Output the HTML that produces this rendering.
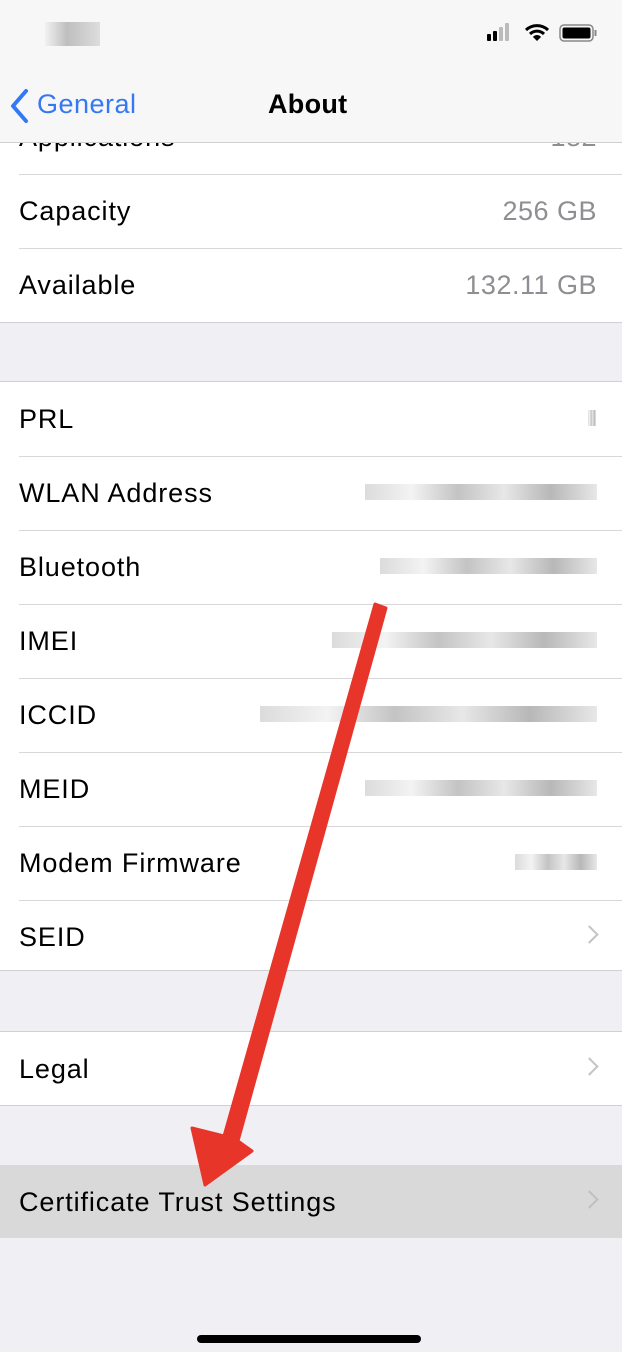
<!DOCTYPE html><html><head><style>
body{margin:0;width:622px;height:1352px;background:#efeff4;font-family:"Liberation Sans",sans-serif;position:relative;overflow:hidden}
.row{position:absolute;left:0;width:622px;height:74px;background:#fff;font-size:27px;letter-spacing:0.9px;color:#000}
.row span{position:absolute;left:19px;top:22px}
.v{position:absolute;right:25px;top:22px;color:#8e8e93;letter-spacing:0.5px}
.sep{position:absolute;left:19px;right:0;height:1px;background:#d8d8dc}
.full{position:absolute;left:0;right:0;height:1px;background:#d0d0d4}
.chev{position:absolute;right:26px;top:28px;width:11px;height:11px;border-right:2px solid #c4c4c8;border-top:2px solid #c4c4c8;transform:rotate(45deg)}
.blur{position:absolute;top:28px;height:16px;background:linear-gradient(90deg,#ccc,#eee 20%,#aaa 40%,#ddd 60%,#999 80%,#ddd);opacity:.7}
</style></head><body>
<div class="row" style="top:100px"><span>Applications</span><div class="v">182</div></div>
<div class="row" style="top:174px"><span>Capacity</span><div class="v">256 GB</div></div>
<div class="row" style="top:248px"><span>Available</span><div class="v">132.11 GB</div></div>
<div class="sep" style="top:174px"></div><div class="sep" style="top:248px"></div><div class="full" style="top:322px"></div>
<div class="full" style="top:381px"></div>
<div class="row" style="top:382px"><span>PRL</span><div class="blur" style="left:588px;width:8px"></div></div>
<div class="row" style="top:456px"><span>WLAN Address</span><div class="blur" style="left:365px;width:232px"></div></div>
<div class="row" style="top:530px"><span>Bluetooth</span><div class="blur" style="left:380px;width:217px"></div></div>
<div class="row" style="top:604px"><span>IMEI</span><div class="blur" style="left:332px;width:265px"></div></div>
<div class="row" style="top:678px"><span>ICCID</span><div class="blur" style="left:260px;width:337px"></div></div>
<div class="row" style="top:752px"><span>MEID</span><div class="blur" style="left:365px;width:232px"></div></div>
<div class="row" style="top:826px"><span>Modem Firmware</span><div class="blur" style="left:515px;width:82px"></div></div>
<div class="row" style="top:900px;height:70px"><span>SEID</span><div class="chev"></div></div>
<div class="sep" style="top:456px"></div><div class="sep" style="top:530px"></div><div class="sep" style="top:604px"></div><div class="sep" style="top:678px"></div><div class="sep" style="top:752px"></div><div class="sep" style="top:826px"></div><div class="sep" style="top:900px"></div><div class="full" style="top:970px"></div>
<div class="full" style="top:1031px"></div>
<div class="row" style="top:1032px;height:73px"><span>Legal</span><div class="chev"></div></div>
<div class="full" style="top:1105px"></div>
<div class="row" style="top:1165px;height:73px;background:#d9d9d9"><span>Certificate Trust Settings</span><div class="chev" style="border-color:#c0c0c0"></div></div>
<div style="position:absolute;left:0;top:0;width:622px;height:142px;background:#f7f7f7;border-bottom:1px solid #d0d0d4"></div>
<div style="position:absolute;left:45px;top:22px;width:55px;height:24px;background:linear-gradient(90deg,#eee,#999 40%,#ccc);opacity:.6"></div>
<svg style="position:absolute;left:486px;top:22px" width="115" height="22"><rect x="1" y="12" width="4" height="7" rx="1"/><rect x="7" y="9" width="4" height="10" rx="1"/><rect x="13" y="5" width="4" height="14" rx="1" fill="#bbb"/><rect x="19" y="1" width="4" height="18" rx="1" fill="#bbb"/>
<path d="M40 8a16 16 0 0 1 22 0M44 12a10 10 0 0 1 14 0" stroke="#000" stroke-width="3" fill="none"/><path d="M47 15l4 4 4-4a5 5 0 0 0-8 0z"/>
<rect x="74" y="3" width="33" height="16" rx="4" fill="none" stroke="#888" stroke-width="1.5"/><rect x="76.5" y="5.5" width="28" height="11" rx="2"/><rect x="108.5" y="8" width="2" height="6" fill="#888"/></svg>
<svg style="position:absolute;left:8px;top:88px" width="22" height="36"><path d="M18 3L5 18l13 15" stroke="#3478f6" stroke-width="4" fill="none" stroke-linecap="round" stroke-linejoin="round"/></svg>
<div style="position:absolute;left:37px;top:89px;font-size:27px;letter-spacing:0.5px;color:#3478f6">General</div>
<div style="position:absolute;left:268px;top:89px;font-size:27px;font-weight:bold;letter-spacing:0.3px">About</div>
<svg style="position:absolute;left:0;top:0" width="622" height="1352"><path d="M375 604L386 608 238 1141 252 1151 205 1185 192 1128 224 1136Z" fill="#e8352a" stroke="#e8352a" stroke-width="3" stroke-linejoin="round"/></svg>
<div style="position:absolute;left:197px;top:1335px;width:224px;height:8px;border-radius:4px;background:#000"></div>
</body></html>
